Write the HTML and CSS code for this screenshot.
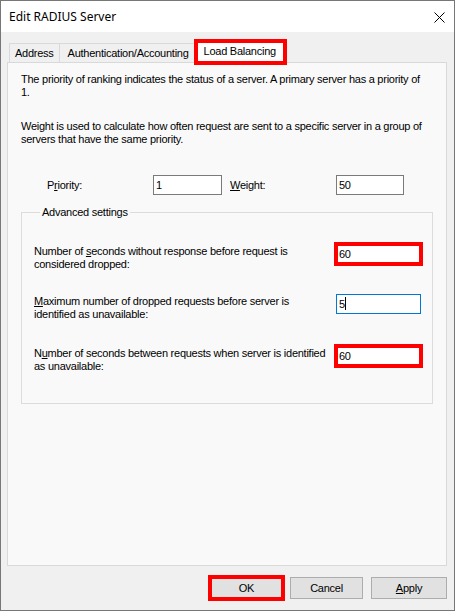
FILE: index.html
```html
<!DOCTYPE html>
<html lang="en">
<head>
    <meta charset="UTF-8">
    <title>Edit RADIUS Server</title>
    <link rel="stylesheet" href="styles.css">
</head>
<body>
    <div class="window">
        <div class="titlebar">
            <span class="title">Edit RADIUS Server</span>
            <svg class="close" width="11" height="11" viewBox="0 0 11 11">
                <path d="M0.5 0.5 L10.5 10.5 M10.5 0.5 L0.5 10.5" stroke="#000" stroke-width="1" fill="none"/>
            </svg>
        </div>

        <div class="body">
            <div class="tabs">
                <div class="tab">Address</div>
                <div class="tab auth">Authentication/Accounting</div>
                <div class="tab selected mark">Load Balancing</div>
            </div>

            <div class="panel">
                <p class="para">The priority of ranking indicates the status of a server. A primary server has a priority of 1.</p>
                <p class="para second">Weight is used to calculate how often request are sent to a specific server in a group of servers that have the same priority.</p>

                <div class="weights">
                    <span class="label">P<u>r</u>iority:</span>
                    <span class="textbox small">1</span>
                    <span class="label"><u>W</u>eight:</span>
                    <span class="textbox small narrow">50</span>
                </div>

                <fieldset class="group">
                    <legend>Advanced settings</legend>
                    <div class="row first">
                        <span class="row-label">Number of <u>s</u>econds without response before request is considered dropped:</span>
                        <span class="textbox mark">60</span>
                    </div>
                    <div class="row">
                        <span class="row-label"><u>M</u>aximum number of dropped requests before server is identified as unavailable:</span>
                        <span class="textbox focused">5<span class="caret"></span></span>
                    </div>
                    <div class="row last">
                        <span class="row-label">N<u>u</u>mber of seconds between requests when server is identified as unavailable:</span>
                        <span class="textbox mark">60</span>
                    </div>
                </fieldset>
            </div>

            <div class="buttons">
                <button class="btn ok mark">OK</button>
                <button class="btn">Cancel</button>
                <button class="btn apply"><u>A</u>pply</button>
            </div>
        </div>
    </div>
</body>
</html>
```

FILE: styles.css
```css
body {
    margin: 0;
    font-family: "Liberation Sans", Arial, sans-serif;
    font-size: 11px;
    letter-spacing: -0.25px;
    color: #000000;
}

.window {
    width: 455px;
    height: 611px;
    box-sizing: border-box;
    border: 1px solid #777777;
    background-color: #f0f0f0;
    display: flex;
    flex-direction: column;
}

.titlebar {
    height: 31px;
    flex: none;
    background-color: #ffffff;
    display: flex;
    align-items: center;
    justify-content: space-between;
    padding: 0 9px 0 8px;
}

.title {
    font-family: "Noto Sans", "Open Sans", sans-serif;
    font-size: 12px;
    letter-spacing: 0;
    padding-bottom: 1px;
}

.close {
    margin-top: 1px;
}

.body {
    flex: 1;
    display: flex;
    flex-direction: column;
    padding: 9px 7px 0 6px;
}

.tabs {
    display: flex;
    align-items: flex-end;
    height: 21px;
    padding-left: 2px;
    position: relative;
    z-index: 1;
}

.tab {
    height: 19px;
    line-height: 18px;
    padding: 0 6px;
    border: 1px solid #d9d9d9;
    border-bottom: none;
    box-sizing: border-box;
    background-color: #f0f0f0;
}

.tab:first-child {
    padding: 0 5px;
}

.tab.auth {
    padding: 0 8px;
}

.tab + .tab {
    border-left: none;
}

.tab.selected {
    height: 22px;
    margin-bottom: -1px;
    margin-left: -2px;
    padding: 0 8px;
    line-height: 18px;
    background-color: #ffffff;
}

.mark {
    outline: 4px solid #ff0000;
    outline-offset: -2px;
}

.panel {
    height: 504px;
    box-sizing: border-box;
    border: 1px solid #d9d9d9;
    background-color: #f9f9f9;
    padding: 10px 13px 0 13px;
}

.para {
    margin: 0;
    max-width: 406px;
    line-height: 13px;
}

.para.second {
    margin-top: 21px;
}

.weights {
    display: flex;
    align-items: center;
    margin-top: 29px;
    padding-left: 26px;
}

.weights .label {
    width: 106px;
}

.weights .label + .textbox {
    margin-right: 8px;
}

.textbox {
    display: inline-block;
    box-sizing: border-box;
    height: 20px;
    width: 85px;
    line-height: 18px;
    padding-left: 2px;
    border: 1px solid #7a7a7a;
    background-color: #ffffff;
}

.textbox.small {
    width: 69px;
}

.textbox.narrow {
    width: 68px;
}

.textbox.focused {
    border-color: #0078d7;
}

.caret {
    display: inline-block;
    width: 1px;
    height: 13px;
    background-color: #000000;
    vertical-align: -2px;
}

.group {
    margin: 11px 0 0 0;
    border: 1px solid #dcdcdc;
    padding: 25px 10px 30px 12px;
}

.group legend {
    padding: 0 2px;
    margin-left: 6px;
    line-height: 13px;
}

.row {
    display: flex;
    align-items: flex-start;
    margin-bottom: 25px;
}

.row.first {
    margin-bottom: 23px;
}

.row.last {
    margin-bottom: 0;
}

.row-label {
    width: 298px;
    margin-right: 4px;
    padding-top: 1px;
    line-height: 13px;
}

.buttons {
    display: flex;
    justify-content: flex-end;
    gap: 8px;
    margin-top: 11px;
}

.btn {
    width: 73px;
    height: 22px;
    font-family: "Liberation Sans", Arial, sans-serif;
    font-size: 11px;
    letter-spacing: -0.25px;
    color: #000000;
    background-color: #e1e1e1;
    border: 1px solid #adadad;
    padding: 0;
}

.btn.ok {
    margin-right: -1px;
}

.btn.apply {
    width: 76px;
}
```
